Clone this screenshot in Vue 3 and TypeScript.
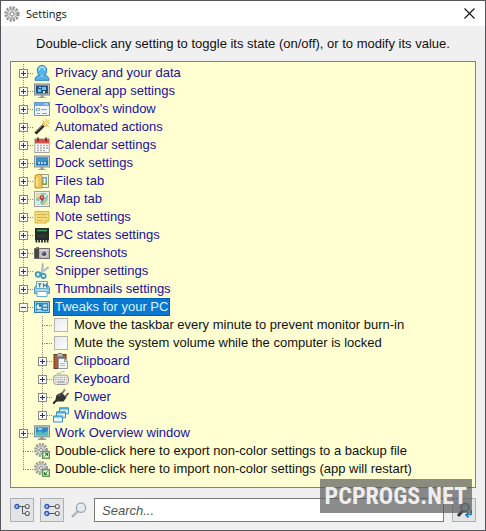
<script setup lang="ts">
import { computed, ref } from 'vue'

interface Node {
  label: string
  icon?: string
  checkbox?: boolean
  action?: boolean
  children?: Node[]
}

interface Row {
  node: Node
  depth: number
  last: boolean
}

const icons: Record<string, string> = {
  gear:
    '<circle cx="8" cy="8" r="6.4" fill="none" stroke="#959595" stroke-width="2.6" stroke-dasharray="2.2 1.15"/><circle cx="8" cy="8" r="4.7" fill="#dcdcdc" stroke="#a0a0a0"/><path d="M8 3.5v9M3.5 8h9" stroke="#acacac"/><circle cx="8" cy="8" r="1.9" fill="#fff" stroke="#909090"/>',
  user:
    '<path d="M1 15.300c0-3.400 2-4.500 4.300-5.100C3.800 8.800 3.300 7 3.300 5.300 3.300 2.400 5.300.5 8 .5s4.700 1.900 4.700 4.800c0 1.700-.5 3.500-2 4.900 2.300.6 4.300 1.700 4.300 5.100z" fill="#55b5ee" stroke="#2683c4"/><path d="M5.300 5.500C5.300 3.200 6.300 2 8 2s2.700 1.200 2.700 3.500" fill="none" stroke="#b4e3fb" stroke-width="1.400"/><path d="M5.800 10.700 8 13l2.200-2.300" fill="#c2e8fa" stroke="#338dc9" stroke-width=".7"/>',
  general:
    '<rect x=".5" y="1" width="15" height="11" fill="#bcc2c6" stroke="#7c868c"/><rect x="2" y="2.500" width="12" height="8" fill="#1f5485"/><path d="M4 6h3v3H4zM8 4h4v3H8z" fill="#78bfe8"/><path d="M5 4h2v1H5zM9 8h2v2H9z" fill="#d5e4a0"/><path d="M6.500 12h3v2h2v1h-7v-1h2z" fill="#949fa5"/>',
  form:
    '<rect x=".5" y="1.500" width="15" height="13" fill="#eff6fb" stroke="#6598c2"/><path d="M1 2h14v3H1z" fill="#69a8d9"/><path d="M10 3h4" stroke="#d9effc"/><rect x="2.500" y="7.500" width="3" height="2" fill="#fff" stroke="#92a9b9"/><path d="M7 8.500h6M3 12.500h3M8 12.500h5" stroke="#8ca0ae"/>',
  wand:
    '<path d="M1.500 14.500 10 6" stroke="#22211f" stroke-width="3"/><path d="m2 13 7.500-7.500" stroke="#777"/><path d="m9.500 6.500 2-2" stroke="#eee4b0" stroke-width="3"/><path d="M12 0v8M8.500 1.500l6 6M8 4h8M15 .8 9.500 6.300" stroke="#e49f25" stroke-width=".9"/><circle cx="12" cy="4" r="1.700" fill="#fff18a"/>',
  calendar:
    '<rect x=".8" y="2" width="14.400" height="13.500" fill="#fff" stroke="#a2a2a2"/><path d="M1 2h14v4.500H1z" fill="#d8534c"/><path d="M4 .5v4M12 .5v4" stroke="#8b2925" stroke-width="1.800"/><path d="M3 8.500h2m1 0h2m1 0h2m1 0h2M3 11h2m1 0h2m1 0h2m1 0h2M3 13.500h2m1 0h2m1 0h2" stroke="#a9a9a9" stroke-width="1.400"/>',
  monitor:
    '<rect x=".5" y="1" width="15" height="11" fill="#c6d0d5" stroke="#809097"/><rect x="2" y="2.500" width="12" height="8" fill="#2676b4"/><path d="M2 2.500h12v3L2 8z" fill="#408fc8"/><path d="M4 8h2m1 0h2m1 0h2" stroke="#e8f6ff" stroke-width="1.500"/><path d="M6.500 12h3v2h2v1h-7v-1h2z" fill="#8c9ca3"/>',
  files:
    '<path d="M4.500 1.500h10v13h-10z" fill="#eef4e9" stroke="#9a9c7c"/><path d="M8 4h5v7H8z" fill="#65a9d4"/><path d="M8 8h5v4H8z" fill="#70a253"/><path d="M9.500 5.500h2v5h-2z" fill="#f4f7ee"/><path d="M1 2.500 6 1l2 2.500V15H1z" fill="#f1c65b" stroke="#c8902a"/><path d="M3 5v8" stroke="#ffe49c" stroke-width="2"/>',
  map:
    '<rect x=".5" y=".5" width="15" height="15" fill="#ecefed" stroke="#9ca2a2"/><path d="M2 2h12v12H2z" fill="#8fc9ba"/><path d="M2 8c3-4 4 0 5-6H2zM10 14c0-4 4-3 4-8v8z" fill="#e9dca4"/><path d="M2 14 14 2M2 10l5 4" stroke="#f7faed" stroke-width="1.200"/><path d="M8 12c0-3-2.300-3.500-2.300-5.500a2.300 2.300 0 0 1 4.600 0C10.300 8.500 8 9 8 12z" fill="#b93a2e"/><circle cx="8" cy="6.300" r=".8" fill="#fff"/>',
  note:
    '<path d="M1 2.500h14v9L11.500 14H1z" fill="#f5dc78" stroke="#d3b449"/><path d="M11.500 14v-2.500H15z" fill="#fff3b1" stroke="#cda936" stroke-width=".7"/><path d="M3 5.500h10M3 8.500h10M3 11.500h6" stroke="#cfb052"/>',
  chip:
    '<path d="M1 3h14v10H1z" fill="#242b28"/><path d="M1 2h14" stroke="#242b28" stroke-width="2"/><path d="M3 3.500h10" stroke="#47a365" stroke-width="1.500"/><path d="M1.500 14h13" stroke="#242b28" stroke-width="3" stroke-dasharray="1.800 1"/><path d="M3 7h10v4H3z" fill="#303834"/>',
  camera:
    '<path d="M.5 3.500h15v10H.5z" fill="#b3b3b3" stroke="#696969"/><path d="M1 4h4v9H1z" fill="#4c4543"/><path d="M2 2h3v1.500H2z" fill="#777"/><path d="M6 5h9" stroke="#e4e4e4"/><circle cx="10" cy="8.800" r="3.300" fill="#79798b" stroke="#ececec"/><circle cx="10" cy="8.800" r="1.500" fill="#37344e"/><circle cx="9.300" cy="8" r=".6" fill="#fff"/>',
  scissors:
    '<path d="M9 .5 8 10M14.500 4 6 11" stroke="#8fa9b4" stroke-width="2"/><path d="m9.500 1-.8 8M14 4.500 8 9.500" stroke="#dae9ef" stroke-width=".7"/><circle cx="4" cy="11.500" r="2.300" fill="none" stroke="#3b98c5" stroke-width="1.800"/><circle cx="9.500" cy="13" r="2.200" fill="none" stroke="#3b98c5" stroke-width="1.800"/>',
  thumbs:
    '<path d="M.5 6.500 2.500 4h11l2 2.500v6H.5z" fill="#83c6e3" stroke="#4a9cc0"/><path d="M2.500.5h11v7h-11z" fill="#edf8fc" stroke="#65aacb"/><path d="M4 2.800h3.500M5.700 3v3.500M9.500 2.300v4.200m3-4.200v4.200M9.500 4.300h3" stroke="#377a9b" stroke-width="1.200"/><path d="M3 10.500h10v5H3z" fill="#fff" stroke="#6aaec9"/><path d="M2.500 9h11" stroke="#d9f1fa"/>',
  tweaks:
    '<rect x=".5" y="2.500" width="15" height="11" fill="#8acbea" stroke="#2e7ea9"/><rect x="2" y="4" width="12" height="8" fill="#2f8cba"/><circle cx="5" cy="7.700" r="2.500" fill="#d8f0f8"/><path d="M5 7.700V5.200a2.500 2.500 0 0 1 2.500 2.500z" fill="#205f7d"/><path d="M9 5.500h4v2H9zM9 9h4v1.500H9z" fill="#d0ecf5"/><path d="M3 11.500h5" stroke="#a6dcf1"/>',
  clipboard:
    '<rect x="1" y="1.500" width="12" height="14" fill="#a95e35" stroke="#75391d"/><path d="M4 2.500C4 1 5 1 5.500.5h3C9 1 10 1 10 2.500V4H4z" fill="#b7babd" stroke="#66696d" stroke-width=".8"/><path d="M5.500 5.500h6l3 3v7h-9z" fill="#f4f7fa" stroke="#909ba4"/><path d="M11.500 5.500v3h3" fill="#cad4dd" stroke="#909ba4"/><path d="M7 10.500h5M7 12.500h5" stroke="#b1bbc3"/>',
  keyboard:
    '<path d="M4 3c1-2 3 0 4-1.500S11 1 11.500.5" fill="none" stroke="#b2b2a8"/><rect x=".5" y="4" width="15" height="9.500" rx="3" fill="#e2e2dc" stroke="#a0a09a"/><path d="M2.500 6.500h11M2.500 8.700h11" stroke="#fff" stroke-width="1.500"/><path d="M2.500 6.500h11M2.500 8.700h11" stroke="#8b8b88" stroke-width="1.200" stroke-dasharray="1 1.100"/><path d="M4.500 11h7" stroke="#888"/>',
  plug:
    '<path d="M.5 15c0-2 1.500-2 3-3.500" fill="none" stroke="#292929" stroke-width="2"/><path d="m2 12.500 1.500-6.500L8.500 3.500l5 5-3 4z" fill="#333"/><path d="m5 7 3-1.500" stroke="#777"/><path d="m9 4.500 3-4M12 8l3.500-4" stroke="#555" stroke-width="1.700"/><path d="m10 3.500 2.500-3" stroke="#ddd" stroke-width=".6"/>',
  windows:
    '<g stroke="#3a91c1"><path d="M6.500.8h9v6h-9z" fill="#d7effb"/><path d="M3.500 4.800h9v6h-9z" fill="#d7effb"/><path d="M.5 9h9v6h-9z" fill="#e6f7ff"/></g><path d="M6.500 1.500h9M3.500 5.500h9M.5 9.700h9" stroke="#4ca8d5" stroke-width="1.800"/>',
  overview:
    '<rect x=".5" y=".8" width="15" height="11" fill="#c4cdd1" stroke="#7e8b91"/><rect x="2" y="2.300" width="12" height="8" fill="#3189c3"/><path d="M2 10.300V8l4-2 3 2 5-2v4.300z" fill="#56bdb9"/><path d="M4 4h4" stroke="#b5e3f8" stroke-width="1.500"/><path d="M6.500 12h3v1.500h2.500V15H4v-1.500h2.500z" fill="#8b989e"/>',
  magnifier:
    '<path d="m6.800 9.200-5 5" stroke="#a3adb5" stroke-width="2.600" stroke-linecap="round"/><path d="m6.500 9-4.500 4.500" stroke="#e8edf0" stroke-width=".7"/><circle cx="10" cy="5.700" r="4.700" fill="#dfeaf3" stroke="#9daab6" stroke-width="1.300"/><path d="M7.500 5.200c.2-1.500 1-2.200 2.500-2.400" fill="none" stroke="#fff"/>',
  find:
    '<path d="m6.500 9-4.500 5" stroke="#34383d" stroke-width="3"/><circle cx="9" cy="5.500" r="4" fill="#a8cadc" stroke="#4e616b" stroke-width="1.500"/><path d="M15 8.500v4h-4m1.500-2L10 13l2.500 2.500" fill="none" stroke="#177bb5" stroke-width="1.700"/>',
  collapse:
    '<path d="M5 4.500h7M8.500 4.500v7H12" fill="none" stroke="#555"/><circle cx="2.800" cy="4.500" r="2" fill="#abc5fa" stroke="#3154b5" stroke-width="1.300"/><circle cx="13.300" cy="4.500" r="2" fill="#f7f7f7" stroke="#666" stroke-width="1.100"/><circle cx="13.300" cy="11.500" r="2" fill="#f7f7f7" stroke="#666" stroke-width="1.100"/>',
  expand:
    '<path d="M4 4.500h8M4 11.500h8" stroke="#555"/><g fill="#abc5fa" stroke="#3154b5" stroke-width="1.300"><circle cx="2.800" cy="4.500" r="2"/><circle cx="2.800" cy="11.500" r="2"/></g><g fill="#f7f7f7" stroke="#666" stroke-width="1.100"><circle cx="13.300" cy="4.500" r="2"/><circle cx="13.300" cy="11.500" r="2"/></g>',
}
const smallGear =
  '<circle cx="7" cy="7" r="5.700" fill="none" stroke="#989898" stroke-width="2.500" stroke-dasharray="2 1"/><circle cx="7" cy="7" r="4.200" fill="#dcdcd5" stroke="#a4a4a4"/><path d="M7 3v8M3 7h8" stroke="#aeaeae"/><circle cx="7" cy="7" r="1.500" fill="#fff" stroke="#909090"/><rect x="8.700" y="8.700" width="6.600" height="6.600" fill="#e8f4df" stroke="#5b9152" stroke-width="1.300"/>'
icons.export = smallGear + '<path d="m10.500 13.500 3-3m-2.500 0h2.500V13" fill="none" stroke="#31752d"/>'
icons.import = smallGear + '<path d="m13.500 10.500-3 3m0-2.500v2.500H13" fill="none" stroke="#31752d"/>'

const tree: Node[] = [
  { label: 'Privacy and your data', icon: 'user', children: [] },
  { label: 'General app settings', icon: 'general', children: [] },
  { label: "Toolbox's window", icon: 'form', children: [] },
  { label: 'Automated actions', icon: 'wand', children: [] },
  { label: 'Calendar settings', icon: 'calendar', children: [] },
  { label: 'Dock settings', icon: 'monitor', children: [] },
  { label: 'Files tab', icon: 'files', children: [] },
  { label: 'Map tab', icon: 'map', children: [] },
  { label: 'Note settings', icon: 'note', children: [] },
  { label: 'PC states settings', icon: 'chip', children: [] },
  { label: 'Screenshots', icon: 'camera', children: [] },
  { label: 'Snipper settings', icon: 'scissors', children: [] },
  { label: 'Thumbnails settings', icon: 'thumbs', children: [] },
  {
    label: 'Tweaks for your PC',
    icon: 'tweaks',
    children: [
      { label: 'Move the taskbar every minute to prevent monitor burn-in', checkbox: true },
      { label: 'Mute the system volume while the computer is locked', checkbox: true },
      { label: 'Clipboard', icon: 'clipboard', children: [] },
      { label: 'Keyboard', icon: 'keyboard', children: [] },
      { label: 'Power', icon: 'plug', children: [] },
      { label: 'Windows', icon: 'windows', children: [] },
    ],
  },
  { label: 'Work Overview window', icon: 'overview', children: [] },
  { label: 'Double-click here to export non-color settings to a backup file', icon: 'export', action: true },
  { label: 'Double-click here to import non-color settings (app will restart)', icon: 'import', action: true },
]

const selected = ref('Tweaks for your PC')
const open = ref<string[]>(['Tweaks for your PC'])
const checked = ref<string[]>([])
const query = ref('')

function flatten(nodes: Node[], depth: number): Row[] {
  return nodes.flatMap((node, i) => [
    { node, depth, last: i === nodes.length - 1 },
    ...(node.children && open.value.includes(node.label) ? flatten(node.children, depth + 1) : []),
  ])
}
const rows = computed(() => flatten(tree, 0))

function toggle(node: Node) {
  if (!node.children) return
  open.value = open.value.includes(node.label)
    ? open.value.filter((l) => l !== node.label)
    : [...open.value, node.label]
}
function expandAll() {
  open.value = tree.filter((n) => n.children).map((n) => n.label)
}
</script>

<template>
  <main class="window">
    <header class="titlebar">
      <svg class="icon" viewBox="0 0 16 16" aria-hidden="true" v-html="icons.gear" />
      <h1>Settings</h1>
      <button class="close" type="button" aria-label="Close">
        <svg viewBox="0 0 11 11"><path d="m.5.5 10 10m0-10-10 10" stroke="#111" stroke-width="1.100" /></svg>
      </button>
    </header>
    <section class="content">
      <p class="hint">Double-click any setting to toggle its state (on/off), or to modify its value.</p>
      <ul class="tree" role="tree" aria-label="Settings">
        <li v-for="row in rows" :key="row.node.label" class="row" role="treeitem" :aria-level="row.depth + 1">
          <span v-for="d in row.depth" :key="d" class="guide" />
          <span class="joint" :class="{ last: row.last }">
            <button
              v-if="row.node.children"
              class="toggle"
              :class="{ minus: open.includes(row.node.label) }"
              type="button"
              :aria-label="'Toggle ' + row.node.label"
              @click="toggle(row.node)"
            />
            <span v-else class="elbow" />
          </span>
          <span class="branch" />
          <label v-if="row.node.checkbox" class="option">
            <input v-model="checked" type="checkbox" :value="row.node.label" />
            <span class="label">{{ row.node.label }}</span>
          </label>
          <template v-else>
            <svg class="icon" viewBox="0 0 16 16" aria-hidden="true" v-html="icons[row.node.icon ?? 'gear']" />
            <span
              class="label"
              :class="{ group: !row.node.action, selected: selected === row.node.label }"
              @click="selected = row.node.label"
              @dblclick="toggle(row.node)"
            >{{ row.node.label }}</span>
          </template>
        </li>
      </ul>
      <footer class="toolbar">
        <button class="tool" type="button" aria-label="Collapse all" @click="open = []">
          <svg class="icon" viewBox="0 0 16 16" v-html="icons.collapse" />
        </button>
        <button class="tool" type="button" aria-label="Expand all" @click="expandAll">
          <svg class="icon" viewBox="0 0 16 16" v-html="icons.expand" />
        </button>
        <label class="lens" for="search" aria-label="Search">
          <svg class="icon" viewBox="0 0 16 16" v-html="icons.magnifier" />
        </label>
        <input id="search" v-model="query" class="search" type="text" placeholder="Search..." />
        <button class="tool find" type="button" aria-label="Find next">
          <svg class="icon" viewBox="0 0 16 16" v-html="icons.find" />
        </button>
      </footer>
    </section>
    <div class="watermark">PCPROGS.NET</div>
  </main>
</template>

<style>
body {
  margin: 0;
}
</style>

<style scoped>
* {
  box-sizing: border-box;
}
.window {
  position: relative;
  display: flex;
  flex-direction: column;
  min-height: 100vh;
  border: 1px solid #55555b;
  background: #f0f0f0;
  color: #111;
  font: 13px/18px "Liberation Sans", Arial, sans-serif;
}
.titlebar {
  display: flex;
  align-items: center;
  height: 25px;
  padding: 0 10px 0 3px;
  background: #fff;
}
h1 {
  flex: 1;
  margin: 0 0 0 6px;
  font: 11px/16px "Open Sans", "Noto Sans", sans-serif;
}
.icon {
  flex: none;
  display: block;
  width: 16px;
  height: 16px;
}
button {
  padding: 0;
}
.close {
  width: 11px;
  height: 11px;
  border: 0;
  background: none;
}
.close svg {
  display: block;
}
.content {
  flex: 1;
  display: flex;
  flex-direction: column;
  padding: 9px 9px 8px;
}
.hint {
  margin: 0 0 8px;
  text-align: center;
  white-space: nowrap;
}
.tree {
  flex: 1;
  margin: 0;
  padding: 2px 8px;
  border: 1px solid #828282;
  background: #ffffd2;
  list-style: none;
}
.row {
  display: flex;
  align-items: center;
  height: 18px;
  white-space: nowrap;
}
.guide,
.joint {
  flex: none;
  height: 18px;
  background: repeating-linear-gradient(#8c8c78 0 1px, transparent 1px 2px) 4px 0 / 1px 100% no-repeat;
}
.guide {
  width: 19px;
}
.joint {
  display: flex;
  align-items: center;
  width: 9px;
}
.joint.last {
  background-size: 1px 10px;
}
.elbow {
  width: 5px;
  margin-left: 4px;
}
.elbow,
.branch {
  height: 1px;
  background: repeating-linear-gradient(90deg, #8c8c78 0 1px, transparent 1px 2px);
}
.branch {
  flex: none;
  width: 6px;
}
.toggle {
  width: 9px;
  height: 9px;
  border: 1px solid #8a8a8a;
  background:
    linear-gradient(#303078, #303078) center / 5px 1px no-repeat,
    linear-gradient(#303078, #303078) center / 1px 5px no-repeat,
    #f8f8f4;
}
.toggle.minus {
  background: linear-gradient(#303078, #303078) center / 5px 1px no-repeat, #f8f8f4;
}
.label {
  margin-left: 3px;
  padding: 0 2px;
}
.group {
  color: #1b10a0;
}
.selected {
  background: #0a78cf;
  color: #d8f4ff;
  outline: 1px dotted #333;
  outline-offset: -1px;
}
.option {
  display: flex;
  align-items: center;
}
.option input {
  appearance: none;
  width: 14px;
  height: 14px;
  margin: 0 1px;
  border: 1px solid #b4b4b0;
  background: linear-gradient(135deg, #e8e8ea, #fff);
}
.option input:checked {
  background: #3478c0;
}
.toolbar {
  display: flex;
  align-items: center;
  margin-top: 10px;
}
.tool {
  display: grid;
  place-items: center;
  flex: none;
  width: 24px;
  height: 24px;
  margin-right: 6px;
  border: 1px solid #adb0b4;
  background: #e3e4e6;
}
.lens {
  margin: 0 7px 0 1px;
}
.search {
  flex: 1;
  min-width: 0;
  height: 24px;
  padding: 0 7px;
  border: 1px solid #7a7a7a;
  background: #fff;
  font: inherit;
}
.search::placeholder {
  color: #555;
  font-style: italic;
  opacity: 1;
}
.find {
  margin: 0 0 0 8px;
}
.watermark {
  position: absolute;
  right: 13px;
  bottom: 17px;
  padding: 0 5px;
  background: rgba(90, 90, 90, 0.7);
  color: #eee;
  font: bold 24px/34px "Liberation Sans Narrow", "Roboto Condensed", "Open Sans Condensed", sans-serif;
  pointer-events: none;
}
</style>
